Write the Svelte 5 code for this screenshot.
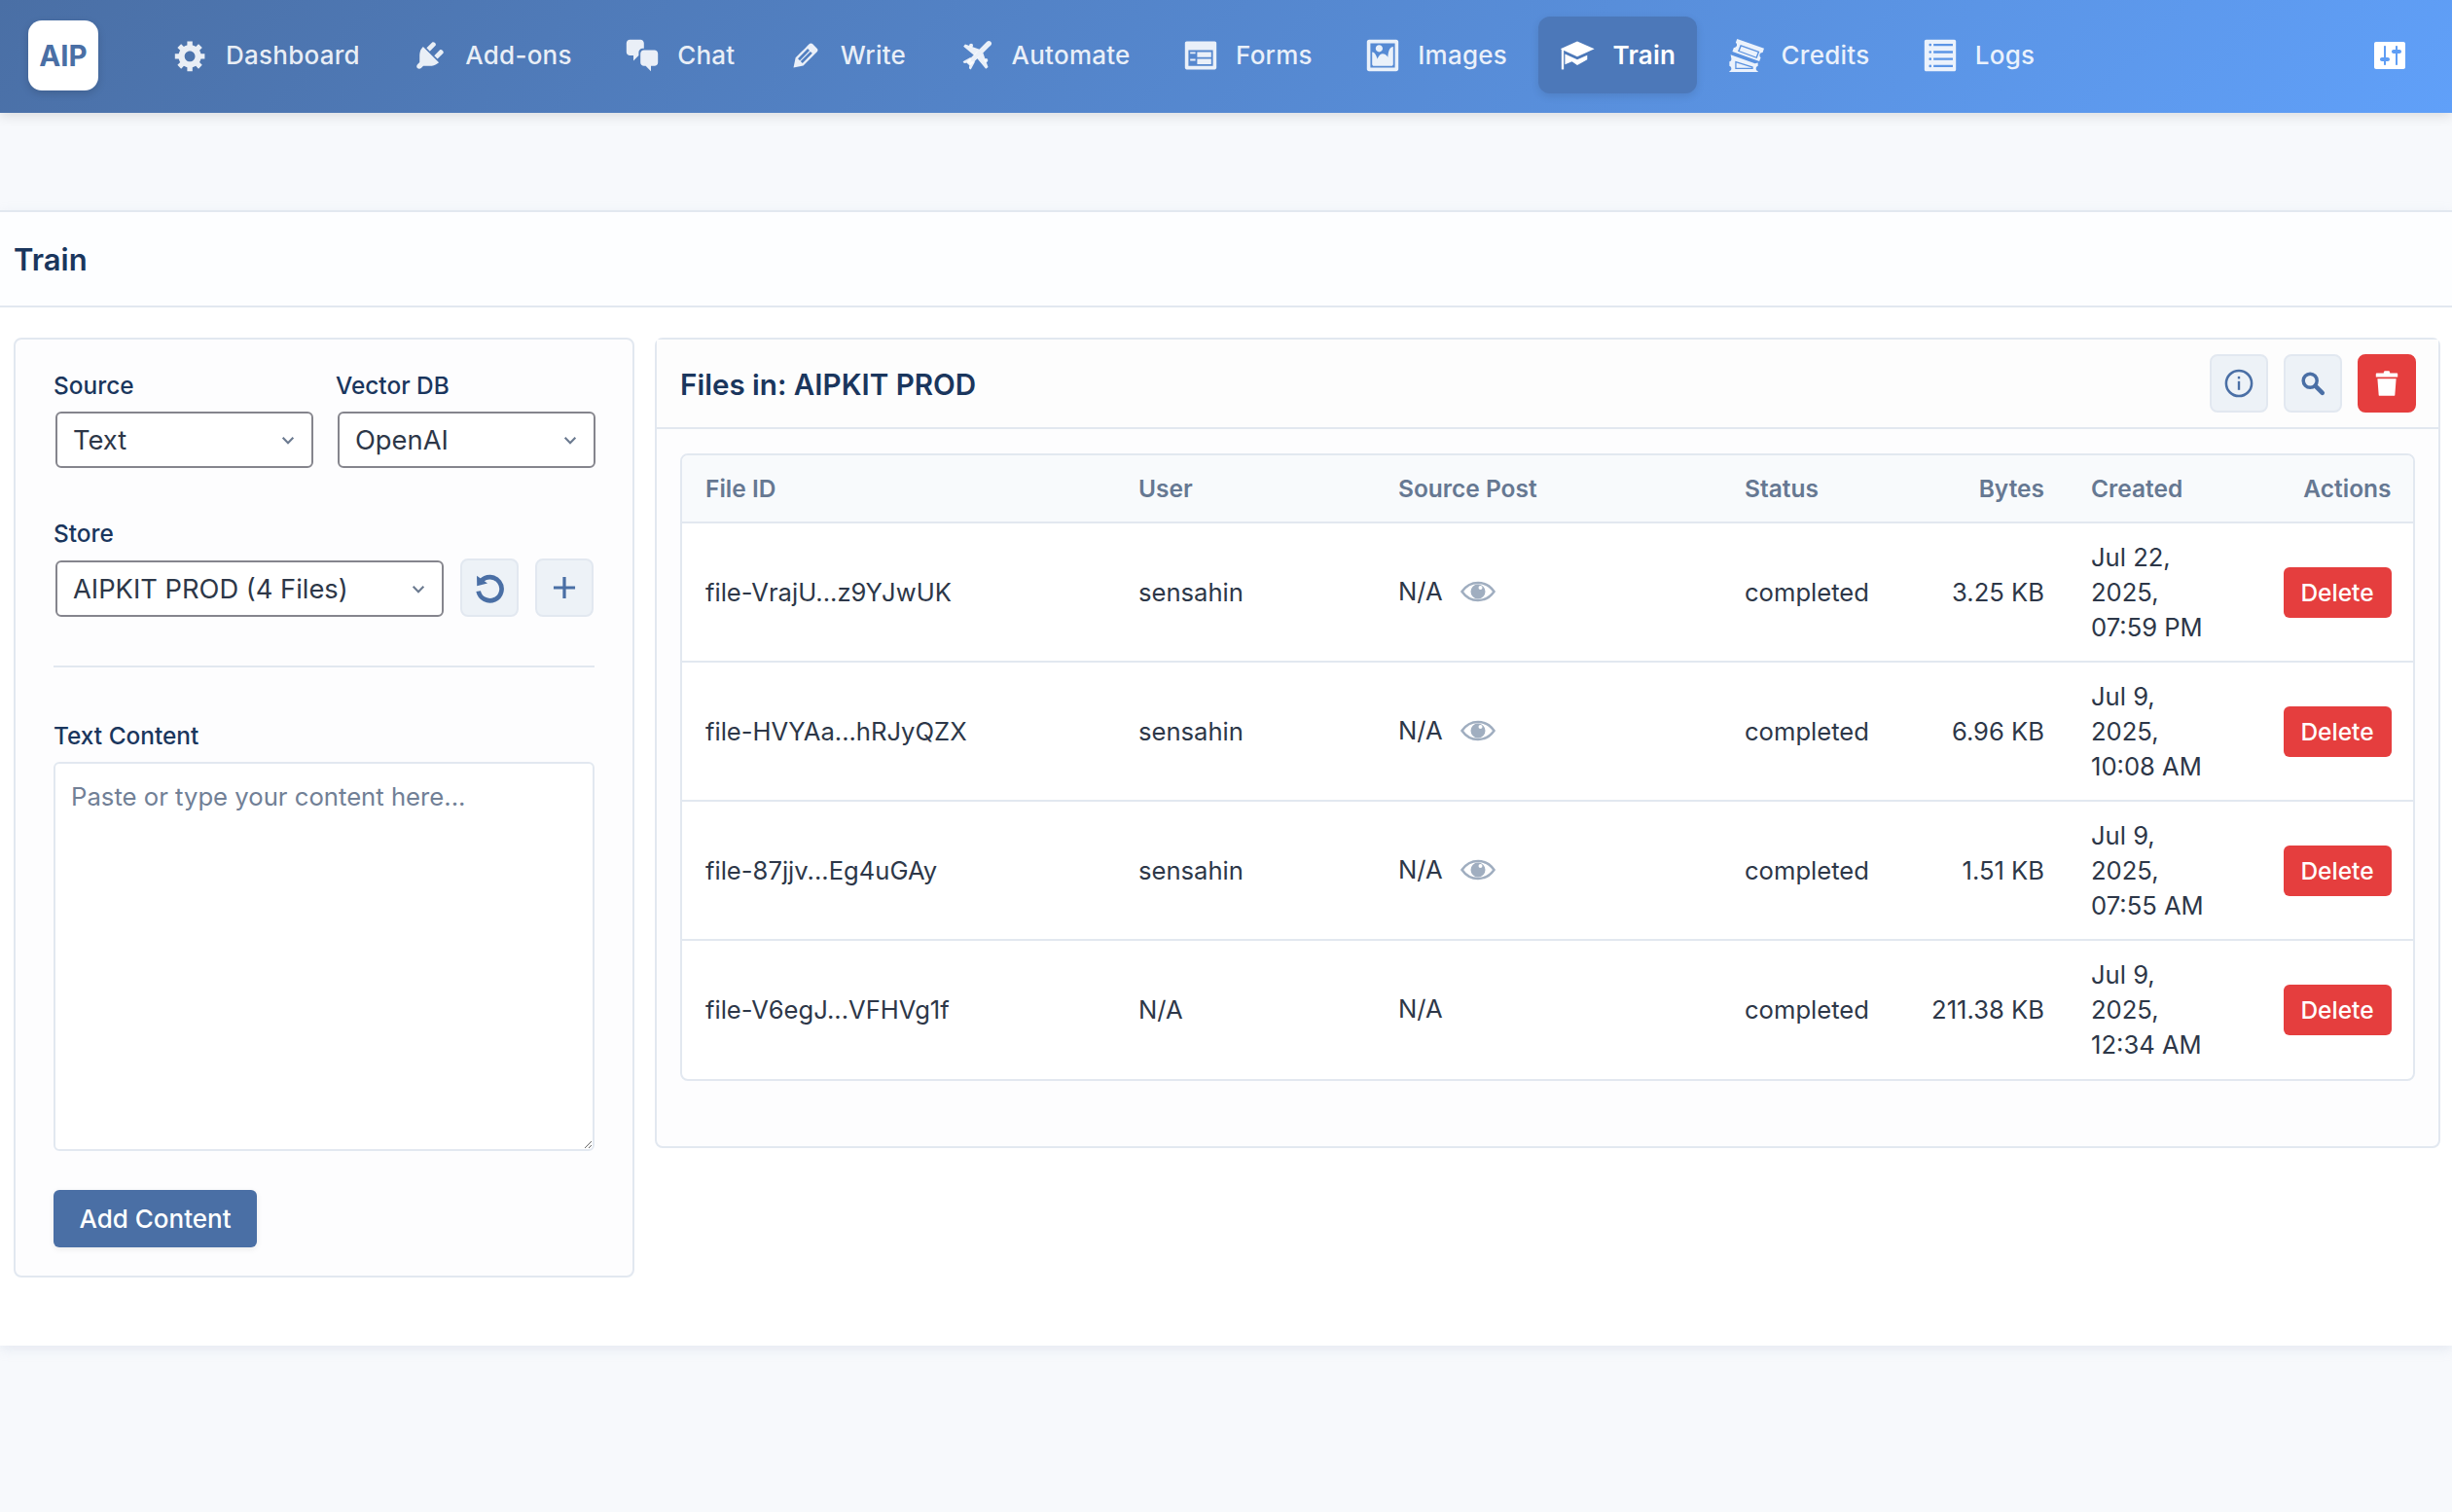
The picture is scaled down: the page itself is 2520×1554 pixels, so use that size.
<script>
  const nav = [
    { label: 'Dashboard', icon: 'gear' },
    { label: 'Add-ons', icon: 'plug' },
    { label: 'Chat', icon: 'chat' },
    { label: 'Write', icon: 'pen' },
    { label: 'Automate', icon: 'plane' },
    { label: 'Forms', icon: 'forms' },
    { label: 'Images', icon: 'image' },
    { label: 'Train', icon: 'cap', active: true },
    { label: 'Credits', icon: 'tickets' },
    { label: 'Logs', icon: 'list' }
  ];
  const files = [
    { id: 'file-VrajU...z9YJwUK', user: 'sensahin', eye: true, bytes: '3.25 KB', date: 'Jul 22, 2025, 07:59 PM' },
    { id: 'file-HVYAa...hRJyQZX', user: 'sensahin', eye: true, bytes: '6.96 KB', date: 'Jul 9, 2025, 10:08 AM' },
    { id: 'file-87jjv...Eg4uGAy', user: 'sensahin', eye: true, bytes: '1.51 KB', date: 'Jul 9, 2025, 07:55 AM' },
    { id: 'file-V6egJ...VFHVg1f', user: 'N/A', eye: false, bytes: '211.38 KB', date: 'Jul 9, 2025, 12:34 AM' }
  ];
</script>

{#snippet icon(name)}
  <svg class="nav-icon" viewBox="0 0 20 20" aria-hidden="true">
    {#if name === 'gear'}
      <path fill-rule="evenodd" d="M18 12h-2.180c-.17.7-.44 1.350-.81 1.930l1.540 1.540-2.100 2.100-1.540-1.540c-.58.36-1.230.63-1.910.79V19H8v-2.180c-.68-.16-1.330-.43-1.910-.79l-1.540 1.540-2.120-2.120 1.540-1.540c-.36-.58-.63-1.230-.79-1.910H1V9.030h2.170c.16-.7.44-1.350.8-1.940L2.430 5.550l2.100-2.100 1.540 1.540c.58-.37 1.240-.64 1.930-.81V2h3v2.180c.68.16 1.330.43 1.910.79l1.540-1.540 2.120 2.120-1.540 1.540c.36.59.64 1.240.8 1.940H18V12zm-8.500 1.500c1.660 0 3-1.340 3-3s-1.340-3-3-3-3 1.340-3 3 1.340 3 3 3z"/>
    {:else if name === 'plug'}
      <path d="M13.110 4.360L9.870 7.600 8 5.730l3.240-3.240c.35-.34 1.050-.2 1.560.32.52.51.66 1.210.31 1.550zm-8 1.770l.91-1.120 9.010 9.010-1.190.84c-.71.71-2.630 1.160-3.820 1.160H6.140L4.900 17.260c-.59.59-1.540.59-2.120 0-.59-.58-.59-1.530 0-2.120l1.240-1.240v-3.880c0-1.130.4-3.190 1.090-3.890zm7.260 3.970l3.240-3.240c.34-.35 1.040-.21 1.550.31.52.51.66 1.210.31 1.550l-3.240 3.250z"/>
    {:else if name === 'chat'}
      <path d="M11 6h-.82C9.070 6 8 7.200 8 8.160V10l-3 3v-3H3c-1.100 0-2-.9-2-2V3c0-1.100.9-2 2-2h6c1.100 0 2 .9 2 2v3zm0 1h6c1.100 0 2 .9 2 2v5c0 1.100-.9 2-2 2h-2v3l-3-3h-1c-1.100 0-2-.9-2-2V9c0-1.100.9-2 2-2z"/>
    {:else if name === 'pen'}
      <path d="M13.890 3.390l2.710 2.720c.46.46.42 1.240.03 1.640l-8.010 8.020-5.560 1.160 1.160-5.580s7.600-7.630 7.990-8.030c.39-.39 1.220-.39 1.680.07zm-2.730 2.790l-5.590 5.610 1.110 1.110 5.540-5.650zm-2.970 8.230l5.580-5.600-1.070-1.080-5.590 5.600z"/>
    {:else if name === 'plane'}
      <path d="M16.800 3.200L6 14" stroke="currentColor" stroke-width="3" stroke-linecap="round" fill="none"/>
      <path d="M11.500 6.500L3.300 3.600 2.300 4.900 8.500 10zM13.500 8.500L16.400 16.700 15.100 17.700 10 11.500zM6.500 11L2 13.500 2.700 14.500 6.500 14zM9 13.500L6.500 18 5.500 17.300 6 13.500z"/>
      <circle cx="6.700" cy="4.300" r="1.100"/><circle cx="15.200" cy="12.800" r="1.100"/>
    {:else if name === 'forms'}
      <path fill-rule="evenodd" d="M2 2h16c.55 0 1 .45 1 1v14c0 .55-.45 1-1 1H2c-.55 0-1-.45-1-1V3c0-.55.45-1 1-1zm15 14V7H3v9h14zM4 8v1h3V8H4zm4 0v3h8V8H8zm-4 4v1h3v-1H4zm4 0v3h8v-3H8z"/>
    {:else if name === 'image'}
      <path fill-rule="evenodd" d="M2.250 1h15.500c.69 0 1.250.56 1.250 1.250v15.500c0 .69-.56 1.250-1.250 1.250H2.250C1.560 19 1 18.440 1 17.750V2.250C1 1.560 1.560 1 2.250 1zM17 17V3H3v14h14zM10 6c0-1.100-.9-2-2-2s-2 .9-2 2 .9 2 2 2 2-.9 2-2zm3 5s0-6 3-6v10c0 .55-.45 1-1 1H5c-.55 0-1-.45-1-1V8c2 0 3 4 3 4s1-3 3-3 3 2 3 2z"/>
    {:else if name === 'cap'}
      <path d="M10 2L19.800 6.300 10 10.700.4 6.300z"/>
      <rect x="1" y="6.500" width="1.300" height="11.500"/>
      <path d="M3 9.200L10 12.300 15.700 9.900V12.400L10 15.500 7 13.500 3 15.200z"/>
    {:else if name === 'tickets'}
      <path fill-rule="evenodd" d="M4.600.5L20 6l-.8 2.400c-.8-.1-1.400.3-1.700 1-.2.7 0 1.400.6 1.800l-.8 2.200L1.900 7.800l.8-2.300c.8.1 1.400-.3 1.700-1 .2-.7 0-1.400-.6-1.800zM6.500 3.900L5 7.700 15.900 11.700 17.400 7.800z"/>
      <path d="M7 4.800L6 7.300 15.400 10.800 16.400 8.200z"/>
      <path fill-rule="evenodd" d="M.9 9.600l13.900 5 1.700-.5V16c-.7.2-1.100.8-1.100 1.500 0 .7.4 1.300 1.100 1.500v.5H.2V19c.7-.2 1.100-.8 1.100-1.500 0-.7-.4-1.300-1.100-1.500v-2.500c.8-.2 1.200-.9 1.100-1.700zM3.500 13.200v4.600H13.700v-1.400z"/>
      <path d="M4.200 14.200v2.900H13v-.2z"/>
    {:else if name === 'list'}
      <path fill-rule="evenodd" d="M2 1h16c.55 0 1 .45 1 1v16c0 .55-.45 1-1 1H2c-.55 0-1-.45-1-1V2c0-.55.45-1 1-1zM4.300 3.200a.75.75 0 1 0 0 1.500.75.75 0 0 0 0-1.500zM6.200 3.300v1.300h11V3.300zM4.300 7.300a.75.75 0 1 0 0 1.500.75.75 0 0 0 0-1.500zM6.200 7.400v1.300h11V7.400zM4.300 11.300a.75.75 0 1 0 0 1.500.75.75 0 0 0 0-1.500zM6.200 11.400v1.300h11v-1.300zM4.300 15.300a.75.75 0 1 0 0 1.500.75.75 0 0 0 0-1.500zM6.200 15.400v1.300h11v-1.300z"/>
    {:else if name === 'controls'}
      <path fill-rule="evenodd" d="M18 16V4c0-.55-.45-1-1-1H3c-.55 0-1 .45-1 1v12c0 .55.45 1 1 1h14c.55 0 1-.45 1-1zM8 11h1c.55 0 1 .45 1 1s-.45 1-1 1H8v1.500c0 .28-.22.5-.5.5s-.5-.22-.5-.5V13H6c-.55 0-1-.45-1-1s.45-1 1-1h1V5.500c0-.28.22-.5.5-.5s.5.22.5.5V11zm5-2h-1c-.55 0-1-.45-1-1s.45-1 1-1h1V5.500c0-.28.22-.5.5-.5s.5.22.5.5V7h1c.55 0 1 .45 1 1s-.45 1-1 1h-1v5.500c0 .28-.22.5-.5.5s-.5-.22-.5-.5V9z"/>
    {/if}
  </svg>
{/snippet}

<div class="page">
  <header class="topbar">
    <div class="logo">AIP</div>
    <nav class="menu">
      {#each nav as item}
        <a class="item" class:active={item.active} href="#top">
          {@render icon(item.icon)}
          <span>{item.label}</span>
        </a>
      {/each}
    </nav>
    <div class="tail">{@render icon('controls')}</div>
  </header>

  <main class="wrap">
    <div class="title-row"><h1>Train</h1></div>
    <div class="columns">
      <section class="card left">
        <div class="pair">
          <div class="field">
            <span class="lab">Source</span>
            <div class="sel"><span>Text</span><svg viewBox="0 0 12 8"><path d="M2 2l4 4 4-4"/></svg></div>
          </div>
          <div class="field">
            <span class="lab">Vector DB</span>
            <div class="sel"><span>OpenAI</span><svg viewBox="0 0 12 8"><path d="M2 2l4 4 4-4"/></svg></div>
          </div>
        </div>
        <div class="field store">
          <span class="lab">Store</span>
          <div class="store-row">
            <div class="sel grow"><span>AIPKIT PROD (4 Files)</span><svg viewBox="0 0 12 8"><path d="M2 2l4 4 4-4"/></svg></div>
            <button class="sq" aria-label="Refresh">
              <svg viewBox="0 0 20 20" class="ic36"><path fill="none" stroke="currentColor" stroke-width="2.600" d="M5.200 6.300A6.700 6.700 0 1 1 3.700 12"/><path fill="currentColor" d="M2.800 3.200l6.100 4.300-6 1.500z"/></svg>
            </button>
            <button class="sq" aria-label="Add">
              <svg viewBox="0 0 20 20" class="ic34"><path fill="none" stroke="currentColor" stroke-width="1.900" d="M10 3.500v13M3.500 10h13"/></svg>
            </button>
          </div>
        </div>
        <hr />
        <label class="lab" for="txt">Text Content</label>
        <textarea id="txt" placeholder="Paste or type your content here..."></textarea>
        <button class="primary">Add Content</button>
      </section>

      <section class="card right">
        <div class="card-head">
          <h2>Files in: AIPKIT PROD</h2>
          <div class="tools">
            <button class="sq" aria-label="Info">
              <svg viewBox="0 0 20 20" class="ic34"><circle cx="10" cy="10" r="7.700" fill="none" stroke="currentColor" stroke-width="1.500"/><rect x="9.300" y="8.700" width="1.400" height="5.300" fill="currentColor"/><rect x="9.300" y="5.800" width="1.400" height="1.500" fill="currentColor"/></svg>
            </button>
            <button class="sq" aria-label="Search">
              <svg viewBox="0 0 20 20" class="ic28"><circle cx="8" cy="8" r="5" fill="none" stroke="currentColor" stroke-width="2.500"/><path d="M12 12l5 5" stroke="currentColor" stroke-width="3.200" stroke-linecap="round"/></svg>
            </button>
            <button class="sq danger" aria-label="Delete all">
              <svg viewBox="0 0 20 20" class="ic32"><path fill="currentColor" d="M8 3c0-.6.4-1 1-1h2c.6 0 1 .4 1 1v.5h4.500c.3 0 .5.2.5.5V6H3V4c0-.3.2-.5.5-.5H8zM4 7h12l-.8 10.500c0 .5-.5.5-1 .5H5.800c-.5 0-1 0-1-.5z"/></svg>
            </button>
          </div>
        </div>
        <div class="table-box">
          <table>
            <colgroup>
              <col class="c1" /><col class="c2" /><col class="c3" /><col class="c4" /><col class="c5" /><col class="c6" /><col />
            </colgroup>
            <thead>
              <tr>
                <th>File ID</th><th>User</th><th>Source Post</th><th>Status</th><th class="num">Bytes</th><th class="created">Created</th><th class="num last">Actions</th>
              </tr>
            </thead>
            <tbody>
              {#each files as f}
                <tr>
                  <td>{f.id}</td>
                  <td>{f.user}</td>
                  <td>
                    <span class="src">N/A
                      {#if f.eye}
                        <svg class="eye" viewBox="0 0 36 24"><path fill="none" stroke="currentColor" stroke-width="2.500" d="M1.500 12C6 5.500 11.500 3 18 3s12 2.500 16.500 9C30 18.500 24.500 21 18 21S6 18.500 1.500 12z"/><path fill="currentColor" fill-rule="evenodd" d="M18 4.500a7.500 7.500 0 1 0 0 15 7.500 7.500 0 0 0 0-15zM20.500 6a2 2 0 1 1 0 4 2 2 0 0 1 0-4z"/></svg>
                      {/if}
                    </span>
                  </td>
                  <td>completed</td>
                  <td class="num">{f.bytes}</td>
                  <td class="created">{f.date}</td>
                  <td class="num last"><button class="del">Delete</button></td>
                </tr>
              {/each}
            </tbody>
          </table>
        </div>
      </section>
    </div>
  </main>
</div>

<style>
  :global(body) {
    margin: 0;
    background: #f7f9fc;
    font-family: Inter, "Noto Sans", sans-serif;
    color: #2d3748;
  }
  .page { height: 1554px; overflow: hidden; }
  .topbar {
    height: 116px;
    box-sizing: border-box;
    display: flex;
    align-items: center;
    padding: 0 44px 3px 29px;
    background: linear-gradient(135deg, #4a6fa5 0%, #60a0f9 100%);
    box-shadow: 0 3px 12px rgba(0, 0, 0, 0.12);
  }
  .logo {
    width: 72px;
    height: 72px;
    flex: none;
    border-radius: 14px;
    background: #fff;
    color: #4a6fa5;
    font-weight: 700;
    font-size: 29.500px;
    display: flex;
    align-items: center;
    justify-content: center;
    box-shadow: 0 3px 8px rgba(0, 0, 0, 0.15);
  }
  .menu { display: flex; align-items: center; gap: 10.400px; margin-left: 55px; flex: 1; }
  .item {
    display: flex;
    align-items: center;
    gap: 18px;
    height: 79px;
    box-sizing: border-box;
    padding: 0 22px;
    border-radius: 12px;
    color: rgba(255, 255, 255, 0.88);
    text-decoration: none;
    font-size: 26px;
    font-weight: 500;
    letter-spacing: 0.25px;
  }
  .item.active {
    background: #4c78b9;
    color: #fff;
    font-weight: 600;
    box-shadow: 0 3px 8px rgba(0, 0, 0, 0.1);
  }
  .nav-icon { width: 36px; height: 36px; fill: currentColor; flex: none; }
  .tail { color: #fff; display: flex; }
  .tail .nav-icon { width: 40px; height: 40px; }
  .wrap {
    margin-top: 100px;
    background: #fff;
    border-top: 2px solid #e2e8f0;
    box-shadow: 0 4px 12px rgba(160, 174, 200, 0.2);
    height: 1167px;
    box-sizing: border-box;
  }
  .title-row {
    height: 98px;
    box-sizing: border-box;
    display: flex;
    align-items: center;
    padding-left: 14px;
    border-bottom: 2px solid #e2e8f0;
    background: #fdfeff;
  }
  h1 { margin: 0; font-size: 31px; font-weight: 600; color: #1a365d; }
  .columns {
    display: flex;
    align-items: flex-start;
    gap: 21px;
    padding: 31px 12px 0 14px;
  }
  .card {
    box-sizing: border-box;
    border: 2px solid #e2e8f0;
    border-radius: 8px;
    background: #fdfdfe;
  }
  .left {
    width: 638px;
    height: 966px;
    flex: none;
    padding: 33px 39px 0 39px;
    display: flex;
    flex-direction: column;
  }
  .pair { display: flex; gap: 23px; margin-right: -1px; }
  .pair .field { flex: 1; min-width: 0; }
  .lab {
    display: block;
    font-size: 24.400px;
    font-weight: 500;
    color: #1a365d;
    line-height: 28px;
  }
  .sel {
    margin: 13px 0 0 2px;
    height: 58px;
    box-sizing: border-box;
    border: 2px solid #85858d;
    border-radius: 6px;
    background: #fff;
    display: flex;
    align-items: center;
    justify-content: space-between;
    padding: 0 16px 0 16px;
    font-size: 27.300px;
    color: #2d3748;
  }
  .sel svg { width: 16px; height: 11px; fill: none; stroke: #6b7a90; stroke-width: 1.600; flex: none; }
  .store { margin-top: 53px; }
  .store .sel { margin-top: 14px; }
  .store-row { display: flex; align-items: flex-end; gap: 17px; margin-right: 1px; }
  .grow { flex: 1; }
  .sq {
    flex: none;
    width: 60px;
    height: 60px;
    padding: 0;
    box-sizing: border-box;
    border: 2px solid #e2e8f0;
    border-radius: 8px;
    background: #edf2f7;
    color: #4a6fa5;
    display: flex;
    align-items: center;
    justify-content: center;
  }
  .ic28 { width: 28px; height: 28px; }
  .ic32 { width: 32px; height: 32px; }
  .ic34 { width: 34px; height: 34px; }
  .ic36 { width: 36px; height: 36px; }
  .danger { background: #e53e3e; border-color: #e53e3e; color: #fff; }
  hr {
    width: 100%;
    box-sizing: border-box;
    margin: 50px 0 56px;
    border: 0;
    border-top: 2px solid #e2e8f0;
  }
  textarea {
    display: block;
    box-sizing: border-box;
    width: 100%;
    height: 400px;
    margin-top: 13px;
    border: 2px solid #e2e8f0;
    border-radius: 6px;
    padding: 18px 16px;
    font-family: inherit;
    font-size: 25.700px;
    color: #2d3748;
    background: #fff;
    outline: none;
  }
  textarea::placeholder { color: #718096; opacity: 1; }
  .primary {
    align-self: flex-start;
    margin-top: 40px;
    width: 209px;
    height: 59px;
    border: 0;
    border-radius: 6px;
    background: #4a6fa5;
    color: #fff;
    font-family: inherit;
    font-size: 26px;
    font-weight: 500;
    padding: 0;
    box-shadow: 0 2px 6px rgba(0, 0, 0, 0.08);
  }
  .right { flex: 1; height: 833px; min-width: 0; }
  .card-head {
    height: 92px;
    box-sizing: border-box;
    border-bottom: 2px solid #e2e8f0;
    display: flex;
    align-items: center;
    justify-content: space-between;
    padding: 0 23px 0 24px;
    background: #fdfdfd;
  }
  h2 { margin: 0; font-size: 29.600px; font-weight: 600; color: #1a365d; position: relative; top: 1px; }
  .tools { display: flex; gap: 16px; }
  .table-box {
    margin: 25px 24px 0 24px;
    border: 2px solid #e2e8f0;
    border-radius: 8px;
    overflow: hidden;
    background: #fff;
  }
  table { width: 100%; border-collapse: collapse; table-layout: fixed; font-size: 25.600px; }
  .c1 { width: 445px; }
  .c2 { width: 267px; }
  .c3 { width: 356px; }
  .c4 { width: 181px; }
  .c5 { width: 175px; }
  .c6 { width: 172px; }
  th {
    height: 69px;
    padding: 0 24px;
    box-sizing: border-box;
    text-align: left;
    font-size: 24.500px;
    font-weight: 600;
    color: #667892;
    background: #f8fafc;
    border-bottom: 2px solid #e2e8f0;
  }
  td {
    padding: 16.500px 24px;
    line-height: 36px;
    height: 143px;
    box-sizing: border-box;
    border-bottom: 2px solid #e2e8f0;
    vertical-align: middle;
    color: #2d3748;
  }
  tr:last-child td { border-bottom: 0; }
  th.created, td.created { padding-left: 24px; padding-right: 10px; }
  .num { text-align: right; }
  th.last, td.last { padding-right: 22.500px; }
  .src { display: inline-flex; align-items: center; gap: 18px; position: relative; top: -1px; }
  .eye { width: 36px; height: 24px; color: #a0aec0; }
  .del {
    width: 111px;
    height: 52px;
    padding: 0;
    border: 0;
    border-radius: 6px;
    background: #e53e3e;
    color: #fff;
    font-family: inherit;
    font-size: 24.500px;
    font-weight: 500;
    vertical-align: middle;
  }
</style>
